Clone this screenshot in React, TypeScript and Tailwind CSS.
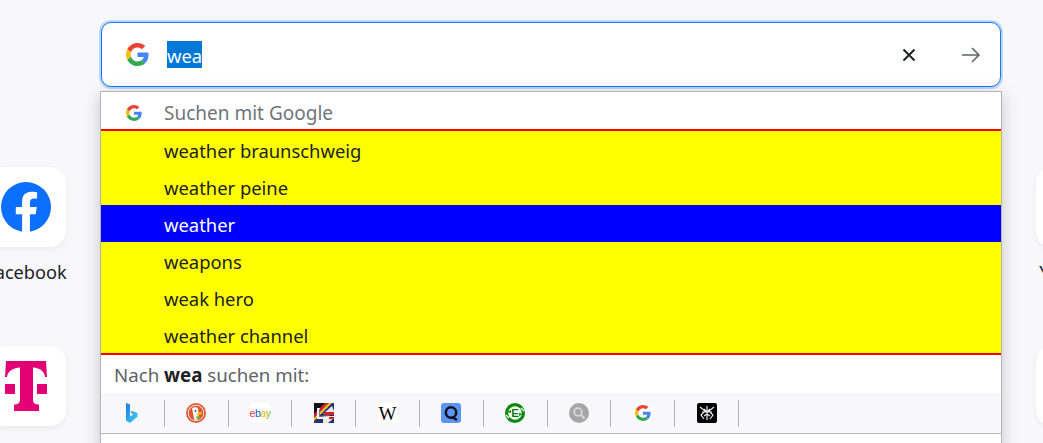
const font = "font-['Noto_Sans','Open_Sans',sans-serif]";

const suggestions = [
    { label: "weather braunschweig" },
    { label: "weather peine" },
    { label: "weather", active: true },
    { label: "weapons" },
    { label: "weak hero" },
    { label: "weather channel" },
];

function GoogleG({ size }: { size: number }) {
    return (
        <svg width={size} height={size} viewBox="0 0 48 48">
            <path fill="#EA4335" d="M24 9.5c3.54 0 6.71 1.22 9.21 3.6l6.85-6.85C35.9 2.38 30.47 0 24 0 14.62 0 6.51 5.38 2.56 13.22l7.98 6.19C12.43 13.72 17.74 9.5 24 9.5z" />
            <path fill="#4285F4" d="M46.98 24.55c0-1.57-.15-3.09-.38-4.55H24v9.02h12.94c-.58 2.96-2.26 5.48-4.78 7.18l7.73 6c4.51-4.18 7.09-10.36 7.09-17.65z" />
            <path fill="#FBBC05" d="M10.53 28.59c-.48-1.45-.76-2.99-.76-4.59s.27-3.14.76-4.59l-7.98-6.19C.92 16.46 0 20.12 0 24c0 3.88.92 7.54 2.56 10.78l7.97-6.19z" />
            <path fill="#34A853" d="M24 48c6.48 0 11.93-2.13 15.89-5.81l-7.73-6c-2.15 1.45-4.92 2.3-8.16 2.3-6.26 0-11.57-4.22-13.47-9.91l-7.98 6.19C6.51 42.62 14.62 48 24 48z" />
        </svg>
    );
}

function Facebook() {
    return (
        <svg width="50" height="50" viewBox="0 0 50 50">
            <circle cx="25" cy="25" r="25" fill="#0c6fff" />
            <path fill="#fff" d="M34.7 32.2l1.1-7.2h-6.9v-4.7c0-2 1-3.9 4-3.9h3.2V10.2s-2.9-.5-5.6-.5c-5.700 0-9.4 3.4-9.4 9.7V25h-6.3v7.2h6.3v17.5c1.3.2 2.6.3 3.9.3s2.6-.1 3.9-.3V32.2h5.8z" />
        </svg>
    );
}

function Telekom() {
    return (
        <svg width="42" height="50" viewBox="0 0 42 50">
            <path fill="#e20074" d="M1 0h40l1 16h-2c-.5-5.500-4.500-9-12-9.500V38c0 4 1.500 5.500 6 5.500V50H9v-6.500c4.500 0 6-1.500 6-5.500V6.500C7.500 7 2.500 10.500 2 16H0z" />
            <rect x="0" y="23" width="10" height="10" fill="#e20074" />
            <rect x="32" y="23" width="10" height="10" fill="#e20074" />
        </svg>
    );
}

// the search engine row, every logo is 20px
function Engine({ children }: { children: React.ReactNode }) {
    return (
        <div className="flex h-[27px] w-[63.8px] shrink-0 items-center justify-center border-r border-[#b4b4b4]">
            {children}
        </div>
    );
}

function EngineRow() {
    return (
        <div className="flex h-[41px] items-center border-b border-[#b9b9b9] bg-[#f8f8fb]">
            <Engine>
                <svg width="20" height="20" viewBox="0 0 20 20">
                    <defs>
                        <linearGradient id="bing" x1="0" y1="0" x2="1" y2="1">
                            <stop offset="0" stopColor="#1b7be8" />
                            <stop offset="1" stopColor="#45d0f0" />
                        </linearGradient>
                    </defs>
                    <path fill="url(#bing)" d="M4 0l4 1.400v12l3.500-2-1.800-.9L8.500 7.500l7 2.500v3.800L8 20l-4-2.500z" />
                </svg>
            </Engine>
            <Engine>
                <svg width="20" height="20" viewBox="0 0 20 20">
                    <circle cx="10" cy="10" r="10" fill="#de5833" />
                    <circle cx="10" cy="10" r="8.200" fill="#fff" />
                    <circle cx="10" cy="10" r="7.400" fill="#de5833" />
                    <path fill="#fff" d="M6 5.500c2-2 5-1.500 6 0l.5 6-1 5.800H8.500z" />
                    <circle cx="9.500" cy="8" r="1" fill="#2d4f8e" />
                    <path fill="#fdd20a" d="M10.500 10l5-1 .3 2-5.300 1.200z" />
                    <path fill="#65bc46" d="M10.500 13l3.500.5-.5 2-3 1z" />
                </svg>
            </Engine>
            <Engine>
                <div className="flex size-5 items-center justify-center rounded-[3px] bg-white font-['Liberation_Sans',sans-serif] text-[10.500px] leading-none tracking-[-0.5px]">
                    <span className="text-[#e53238]">e</span>
                    <span className="text-[#0064d2]">b</span>
                    <span className="text-[#f5af02]">a</span>
                    <span className="text-[#86b817]">y</span>
                </div>
            </Engine>
            <Engine>
                <svg width="20" height="20" viewBox="0 0 20 20">
                    <rect width="20" height="20" fill="#24307a" />
                    <path fill="#111" d="M0 0h11L0 11z" />
                    <path fill="#d8202a" d="M0 11L11 0h4L0 15z" />
                    <path fill="#f6c71c" d="M0 15L15 0h3L0 18z" />
                    <path fill="#e8e8e8" d="M18 3L9 11h11V8z" />
                    <path fill="#d8202a" d="M20 9H10v3h10z" />
                    <path fill="#e8e8e8" d="M9 13h11v2L14 20H9z" />
                    <path fill="#c22" d="M12 14h8v2h-8z" />
                    <path fill="#f2f2f2" d="M3 5h3v9l9-1v3H3z" />
                    <path fill="#777" d="M5 6h1v7l9-1v1l-9 1H5z" />
                </svg>
            </Engine>
            <Engine>
                <div className="flex size-5 items-center justify-center bg-white font-['Liberation_Serif',serif] text-[19px] leading-none text-black">
                    W
                </div>
            </Engine>
            <Engine>
                <svg width="20" height="20" viewBox="0 0 20 20">
                    <rect width="20" height="20" rx="3" fill="#5c95f5" />
                    <circle cx="10" cy="9.500" r="5.200" fill="none" stroke="#10131c" strokeWidth="2.600" />
                    <path stroke="#10131c" strokeWidth="2.600" d="M11 14l5 3" />
                </svg>
            </Engine>
            <Engine>
                <svg width="20" height="20" viewBox="0 0 20 20">
                    <circle cx="10" cy="10" r="10" fill="#0a8a0a" />
                    <circle cx="10" cy="10" r="6.800" fill="#fff" />
                    <path fill="#0a8a0a" d="M2 9l4-2v3zM18 11l-4 2v-3z" />
                    <path stroke="#fff" strokeWidth="1.200" d="M1 12l3 3M16 5l3 3" />
                    <text x="10" y="14" textAnchor="middle" fill="#0a7a0a" fontSize="11.500" fontWeight="700" fontFamily="Liberation Sans">E</text>
                </svg>
            </Engine>
            <Engine>
                <svg width="20" height="20" viewBox="0 0 20 20">
                    <circle cx="10" cy="10" r="10" fill="#a6a6a6" />
                    <circle cx="9" cy="9" r="3.800" fill="none" stroke="#d9d9d9" strokeWidth="1.800" />
                    <path stroke="#d9d9d9" strokeWidth="2" d="M12 12l3.500 3.500" />
                </svg>
            </Engine>
            <Engine>
                <div className="flex size-5 items-center justify-center rounded-full bg-white">
                    <GoogleG size={16} />
                </div>
            </Engine>
            <Engine>
                <svg width="20" height="20" viewBox="0 0 20 20">
                    <rect width="20" height="20" rx="2" fill="#000" />
                    <g fill="none" stroke="#e8e8e8" strokeWidth="1.200">
                        <path d="M10 3v14M3 4l5 4-4 4 3 4M17 4l-5 4 4 4-3 4M5 9h10M7 6l3 3 3-3M7 13l3-2 3 2" />
                    </g>
                </svg>
            </Engine>
        </div>
    );
}

export default function App() {
    return (
        <div className={`relative h-[443px] w-[1043px] overflow-hidden bg-[#f8f8fb] ${font}`}>
            <div className="pl-[101px] pt-[22px]">
                <div className="flex h-[65px] w-[900px] items-center rounded-[10px] border border-[#1a73f8] bg-white pl-[24px] pr-[19px] shadow-[0_0_0_2px_#bcd7fd]">
                    <GoogleG size={23} />
                    <span className="ml-[18px] h-[27px] overflow-hidden bg-[#0078d7] text-[18.400px] leading-[30px] text-white">wea</span>
                    <svg className="ml-auto" width="16" height="16" viewBox="0 0 16 16">
                        <path stroke="#202124" strokeWidth="2" d="M2.500 2.500l11 11M13.500 2.500l-11 11" />
                    </svg>
                    <svg className="ml-[44px]" width="20" height="20" viewBox="0 0 20 20">
                        <path fill="none" stroke="#5f6368" strokeWidth="1.600" d="M1 10h17M11 3l7 7-7 7" />
                    </svg>
                </div>
            </div>

            {/* shortcut tiles, the ends of the grid run off the window */}
            <div className="ml-[-14px] mt-[80px] flex w-[1130px] justify-between">
                <div className="flex flex-col gap-[87px]">
                    <div className="flex w-[80px] flex-col items-center">
                        <div className="flex size-[80px] items-center justify-center rounded-[16px] bg-white shadow-[0_2px_6px_rgba(0,0,0,0.06)]">
                            <Facebook />
                        </div>
                        <span className="mt-[12px] h-0 text-[18.200px] leading-[27px] whitespace-nowrap text-[#202124]">Facebook</span>
                    </div>
                    <div className="flex size-[80px] items-center justify-center rounded-[16px] bg-white shadow-[0_2px_6px_rgba(0,0,0,0.06)]">
                        <Telekom />
                    </div>
                </div>
                <div className="flex w-[80px] flex-col gap-[87px]">
                    <div className="flex w-[80px] flex-col items-center">
                        <div className="size-[80px] rounded-[16px] bg-white shadow-[0_2px_6px_rgba(0,0,0,0.06)]" />
                        <span className="mt-[12px] h-0 text-[18.200px] leading-[27px] whitespace-nowrap text-[#202124]">YouTube</span>
                    </div>
                    <div className="size-[80px] rounded-[16px] bg-white shadow-[0_2px_6px_rgba(0,0,0,0.06)]" />
                </div>
            </div>

            <div className="absolute left-[100px] top-[91px] w-[902px] border border-[#b4b4b4] bg-white shadow-[0_4px_16px_rgba(0,0,0,0.2)]">
                <div className="flex h-[39px] items-center border-b-2 border-[#ff0000] pl-[25px] pt-[5px]">
                    <GoogleG size={16} />
                    <span className="ml-[22px] text-[19px] leading-[27px] text-[#70757a]">Suchen mit Google</span>
                </div>
                {suggestions.map((item, index) => (
                    <div
                        key={index}
                        className={`flex h-[37px] items-center pl-[63px] pt-[3px] text-[18.400px] ${item.active ? "bg-[#0000ff] text-white" : "bg-[#ffff00] text-[#202124]"}`}
                    >
                        {item.label}
                    </div>
                ))}
                <div className="flex h-[40px] items-center border-t-2 border-[#ff0000] pl-[13px] pt-[2px] text-[18.700px] text-[#5f6368]">
                    Nach&nbsp;<b className="font-bold text-[#202124]">wea</b>&nbsp;suchen mit:
                </div>
                <EngineRow />
                <div className="h-[20px] bg-white" />
            </div>
        </div>
    );
}
